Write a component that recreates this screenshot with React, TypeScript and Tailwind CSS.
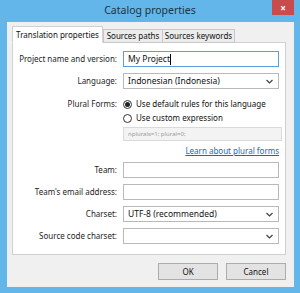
const font = { fontFamily: '"Noto Sans", "Open Sans", sans-serif' };

function Chevron() {
  return (
    <svg width="7" height="5" viewBox="0 0 7 5" className="shrink-0">
      <polyline points="0.5,1 3.5,4 6.5,1" fill="none" stroke="#404040" strokeWidth="1.2" />
    </svg>
  );
}

function Label({ children }: { children: React.ReactNode }) {
  return <div className="w-[105px] shrink-0 text-right pr-[1px] text-[#1e1e1e] whitespace-nowrap">{children}</div>;
}

function TextBox({ value, focused }: { value?: string; focused?: boolean }) {
  return (
    <div
      className={`flex-1 h-[16px] bg-white border flex items-center px-[4px] ${
        focused ? 'border-[#5a9fdc]' : 'border-[#b9b9b9]'
      }`}
    >
      {value && <span className="text-[#111] text-[8.5px]">{value}</span>}
      {focused && <span className="w-px h-[11px] bg-black" />}
    </div>
  );
}

function Combo({ value }: { value?: string }) {
  return (
    <div className="flex-1 h-[16px] bg-white border border-[#b9b9b9] flex items-center justify-between pl-[4px] pr-[5px]">
      <span className="text-[#111] text-[8.5px] whitespace-nowrap">{value}</span>
      <Chevron />
    </div>
  );
}

function Radio({ checked, label }: { checked?: boolean; label: string }) {
  return (
    <div className="flex items-center h-[14px] gap-[4px]">
      <div className="w-[9px] h-[9px] rounded-full border border-[#333] bg-white flex items-center justify-center">
        {checked && <div className="w-[5px] h-[5px] rounded-full bg-[#222]" />}
      </div>
      <span className="text-[#111] text-[8px] whitespace-nowrap">{label}</span>
    </div>
  );
}

function Button({ children }: { children: React.ReactNode }) {
  return (
    <div className="w-[60px] h-[17px] bg-[#e3e3e3] border border-[#acacac] flex items-center justify-center text-[#111]">
      {children}
    </div>
  );
}

export default function App() {
  return (
    <div className="w-[300px] h-[293px] bg-[#63b6ea] flex flex-col text-[8px] leading-none" style={font}>
      {/* title bar */}
      <div className="h-[22px] grid grid-cols-[28px_1fr_28px] items-start shrink-0">
        <div />
        <div className="text-center text-[10.5px] text-[#1e3440] pt-[5px] whitespace-nowrap">Catalog properties</div>
        <div className="flex justify-start">
          <div className="w-[22px] h-[15px] bg-[#c94c4c] flex items-center justify-center text-white text-[10px] font-bold">
            ×
          </div>
        </div>
      </div>

      {/* body */}
      <div className="ml-[7px] mr-[6px] mb-[6px] flex-1 bg-[#f0f0f0] flex flex-col pl-[5px] pr-[8px] pt-[5px]">
        {/* tabs */}
        <div className="flex items-end h-[16px] relative z-10 whitespace-nowrap">
          <div className="w-[91px] h-[17px] bg-white border border-[#d0d0d0] border-b-white flex items-center justify-center text-[#111]">
            Translation properties
          </div>
          <div className="w-[60px] h-[14px] bg-[#ececec] border border-[#c8c8c8] flex items-center justify-center text-[#111]">
            Sources paths
          </div>
          <div className="w-[72px] h-[14px] bg-[#ececec] border border-[#c8c8c8] border-l-0 flex items-center justify-center text-[#111]">
            Sources keywords
          </div>
        </div>

        {/* panel */}
        <div className="h-[213px] bg-white border border-[#d0d0d0] -mt-px flex flex-col pt-[8px] pr-[6px] gap-[6px]">
          <div className="flex items-center gap-[5px]">
            <Label>Project name and version:</Label>
            <TextBox value="My Project" focused />
          </div>
          <div className="flex items-center gap-[5px]">
            <Label>Language:</Label>
            <Combo value="Indonesian (Indonesia)" />
          </div>
          <div className="flex items-start gap-[5px] mt-[2px]">
            <div className="pt-[3px]">
              <Label>Plural Forms:</Label>
            </div>
            <div className="flex-1 flex flex-col">
              <Radio checked label="Use default rules for this language" />
              <Radio label="Use custom expression" />
              <div className="mt-[2px] h-[14px] bg-[#f3f3f3] border border-[#dadada] flex items-center px-[4px] text-[6px] text-[#9a9a9a] mr-[-3px] whitespace-nowrap">
                nplurals=1; plural=0;
              </div>
              <div className="flex justify-end items-center mt-[4px] h-[11px]">
                <span className="text-[#0f6cc4] underline whitespace-nowrap">Learn about plural forms</span>
              </div>
            </div>
          </div>
          <div className="flex items-center gap-[5px]">
            <Label>Team:</Label>
            <TextBox />
          </div>
          <div className="flex items-center gap-[5px]">
            <Label>Team's email address:</Label>
            <TextBox />
          </div>
          <div className="flex items-center gap-[5px]">
            <Label>Charset:</Label>
            <Combo value="UTF-8 (recommended)" />
          </div>
          <div className="flex items-center gap-[5px]">
            <Label>Source code charset:</Label>
            <Combo />
          </div>
        </div>

        {/* buttons */}
        <div className="flex justify-end gap-[8px] mt-[8px]">
          <Button>OK</Button>
          <Button>Cancel</Button>
        </div>
      </div>
    </div>
  );
}
